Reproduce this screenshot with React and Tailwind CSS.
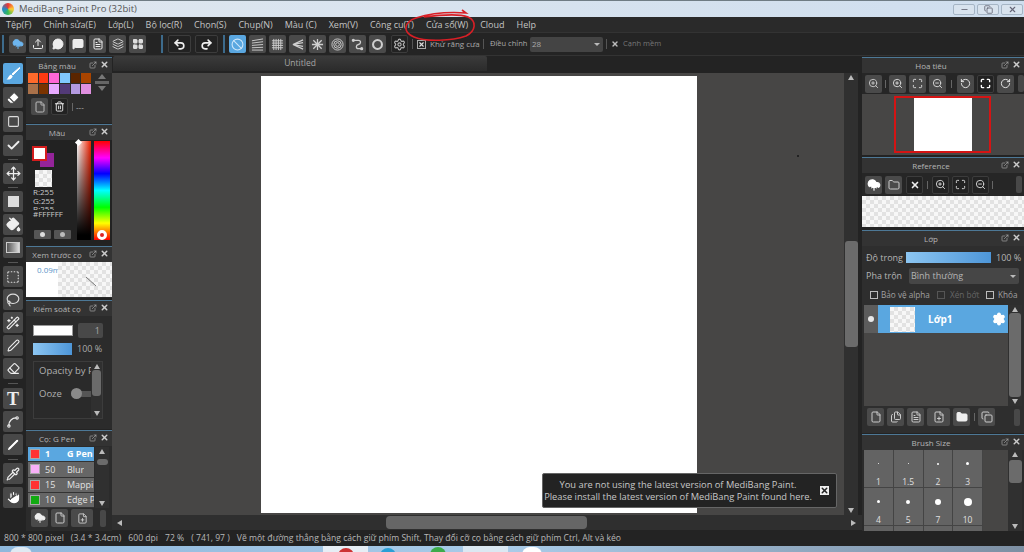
import React from "react";
import {
  Upload, MessageCircle, MessageSquare, FileText, LayoutGrid, Undo2, Redo2, Ban, Move, PaintBucket, Pipette, Hand,
  WandSparkles, Eraser, Square, File, Trash2, ZoomIn, ZoomOut, Maximize, X, ExternalLink, Folder,
  CloudUpload, Settings, Copy, RotateCcw, RotateCw, Minus, Check, Pen, Spline, Lasso, SquareDashed, Files, FilePlus, Layers,
} from "lucide-react";

const font = "font-['Open_Sans','Noto_Sans',sans-serif]";

function Btn({ children, active, dark, className = "" }) {
  return (
    <div className={`flex h-[18px] w-[17px] shrink-0 items-center justify-center rounded-[2px] ${active ? "bg-[#5aa7e0]" : dark ? "border border-[#3c3c3c] bg-[#222]" : "bg-[#4a4a4a]"} ${className}`}>
      {children}
    </div>
  );
}

function Sep({ className = "" }) {
  return <div className={`h-[18px] w-[2px] shrink-0 bg-[#3d6b8c] ${className}`} />;
}

function LineIcon({ kind }) {
  const c = "#cfcfcf";
  const common = { width: 13, height: 13, viewBox: "0 0 14 14", fill: "none", stroke: c, strokeWidth: 1 };
  if (kind === "para")
    return <svg {...common}><path d="M1 3 13 1M1 5.5 13 4M1 8 13 7M1 10.5 13 10M1 13 13 13" /></svg>;
  if (kind === "grid")
    return <svg {...common}><path d="M1 3h12M1 5.5h12M1 8h12M1 10.5h12M3 1v12M5.500 1v12M8 1v12M10.500 1v12" /></svg>;
  if (kind === "vanish")
    return <svg {...common}><path d="M2 7 13 2M2 7 13 5M2 7 13 9M2 7 13 12" strokeWidth="1.3" /></svg>;
  if (kind === "radial")
    return <svg {...common} strokeWidth="1.4"><path d="M7 1v12M1 7h12M2.500 2.500l9 9M11.500 2.500l-9 9" /></svg>;
  if (kind === "rings")
    return <svg {...common}><circle cx="7" cy="7" r="6" /><circle cx="7" cy="7" r="4" /><circle cx="7" cy="7" r="2" /></svg>;
  if (kind === "curve")
    return <svg {...common} strokeWidth="1.4"><path d="M3 2.500h5c3 0 3 4 0 4.500-3 .5-3 4.500 0 4.500h3" /><circle cx="2.500" cy="2.500" r="1" fill={c} /><circle cx="11.500" cy="11.500" r="1" fill={c} /></svg>;
  if (kind === "ring")
    return <svg {...common} strokeWidth="2.200"><circle cx="7" cy="7" r="4.800" /></svg>;
  return null;
}

function BrushIcon() {
  return (
    <svg width="16" height="16" viewBox="0 0 16 16" fill="#fff">
      <path d="M14.500 1.500 15 2 8 9 7 8z" stroke="#fff" strokeWidth="1" />
      <path d="M6 8.500 7.700 10.200C7.200 12.500 4.500 14 1.500 13.500 3.200 12.500 3.500 9.500 6 8.500z" />
    </svg>
  );
}

function Tool({ children, active, className = "" }) {
  return (
    <div className={`flex h-[21px] w-[20px] shrink-0 items-center justify-center rounded-[2px] ${active ? "bg-[#5aa7e0]" : "bg-[#484848]"} ${className}`}>
      {children}
    </div>
  );
}

function ToolSep({ className = "my-[3px]" }) {
  return <div className={`h-px w-[10px] shrink-0 bg-[#555] ${className}`} />;
}

function PanelHeader({ title }) {
  return (
    <div className="relative flex h-[16px] shrink-0 items-center justify-center border-t border-[#4d7896] bg-[#333] text-[8px] text-[#b5b5b5]">
      <span className="mr-[24px] whitespace-nowrap">{title}</span>
      <div className="absolute right-[3px] top-[2px] flex items-center gap-[3px]">
        <ExternalLink size={8} color="#aaa" />
        <X size={9} color="#ccc" strokeWidth={4} />
      </div>
    </div>
  );
}

const sw = ["#ff6a2b", "#ff3a12", "#ff66d6", "#80c8ff", "#5a2500", "#a84400", "#a9714a", "#7a3300", "#e8aaff", "#523a78", "#b39ae0", "#e090e0"];

function Checker({ className = "" }) {
  return (
    <div className={`bg-[repeating-conic-gradient(#e2e2e2_0%_25%,#f7f7f7_0%_50%)] bg-[length:8px_8px] ${className}`} />
  );
}

function BrushRow({ color, n, name, active }) {
  return (
    <div className={`flex h-[15.300px] items-center border-b border-[#333] text-[9px] ${active ? "bg-[#5aa7e0] font-bold text-white" : "bg-[#666] text-[#e2e2e2]"}`}>
      <div className="ml-[2px] h-[10px] w-[10px] shrink-0 border border-[#aaa]" style={{ background: color }} />
      <span className="ml-[3px] w-[24px] shrink-0 pl-[2px]">{n}</span>
      <span className="overflow-hidden whitespace-nowrap">{name}</span>
    </div>
  );
}

function VScroll({ className = "", thumb = "h-[14px]", thumbMt = "mt-0" }) {
  return (
    <div className={`flex flex-col items-center bg-[#303030] ${className}`}>
      <div className="mt-[2px] h-0 w-0 border-x-[3px] border-b-[5px] border-x-transparent border-b-[#bbb]" />
      <div className="relative w-full flex-1">
        <div className={`mx-auto w-[9px] rounded-[3px] bg-[#6b6b6b] ${thumb} ${thumbMt}`} />
      </div>
      <div className="mb-[2px] h-0 w-0 border-x-[3px] border-t-[5px] border-x-transparent border-t-[#bbb]" />
    </div>
  );
}

function SizeCell({ d, label }) {
  return (
    <div className="flex h-[38px] flex-col items-center border-b border-r border-[#444] bg-[#636363]">
      <div className="flex h-[27px] shrink-0 items-center justify-center">
        <div className="rounded-full bg-white" style={{ width: d, height: d }} />
      </div>
      <span className="text-[8.5px] leading-[10px] text-[#e0e0e0]">{label}</span>
    </div>
  );
}

export default function App() {
  return (
    <div className={`relative flex h-[552px] w-[1024px] flex-col overflow-hidden bg-[#222] ${font}`}>
      {/* Title bar */}
      <div className="flex h-[17px] shrink-0 items-center border-t border-[#6f7c84] bg-gradient-to-r from-[#dfe7ef] to-[#cfdeee] pl-[2px]">
        <div className="h-[12px] w-[12px] rounded-full bg-[conic-gradient(#e33,#fc3,#3b5,#28c,#e33)]" />
        <span className="ml-[5px] text-[9.5px] text-[#555]">MediBang Paint Pro (32bit)</span>
        <div className="ml-auto mr-px flex gap-[2px]">
          {[<Minus key="a" size={9} color="#556" />, <Copy key="b" size={9} color="#556" />, <X key="c" size={9} color="#667" strokeWidth={3} />].map((ic, i) => (
            <div key={i} className="flex h-[11px] w-[22px] items-center justify-center rounded-[2px] border border-[#a5b5c5] bg-[#d8e3ee]">{ic}</div>
          ))}
        </div>
      </div>

      {/* Menu */}
      <div className="relative flex h-[16px] shrink-0 items-center gap-[12px] border-b border-[#333] bg-[#2a2a2a] pl-[6px] text-[9px] text-[#c4c4c4]">
        <span>Tệp(F)</span><span>Chỉnh sửa(E)</span><span>Lớp(L)</span><span>Bộ lọc(R)</span><span>Chọn(S)</span><span>Chụp(N)</span><span>Màu (C)</span><span>Xem(V)</span><span>Công cụ(T)</span><span>Cửa sổ(W)</span><span>Cloud</span><span>Help</span>
      </div>

      {/* Toolbar */}
      <div className="flex h-[23px] shrink-0 items-center border-b border-[#333] bg-[#242424] text-[8px] text-[#a8a8a8]">
        <Sep className="ml-[2px]" />
        <div className="ml-[5px] flex gap-[3px]">
          <Btn><CloudUpload size={12} color="#6db5ee" fill="#6db5ee" /></Btn>
          <Btn><Upload size={12} color="#eee" /></Btn>
          <Btn><MessageCircle size={12} color="#eee" fill="#eee" /></Btn>
          <Btn><MessageSquare size={12} color="#eee" fill="#eee" /></Btn>
          <Btn><FileText size={12} color="#eee" /></Btn>
          <Btn><Layers size={12} color="#ccc" /></Btn>
          <Btn><LayoutGrid size={12} color="#ddd" fill="#ddd" /></Btn>
        </div>
        <Sep className="ml-[15px]" />
        <div className="ml-[5px] flex gap-[4px]">
          <Btn dark className="!w-[23px]"><Undo2 size={13} color="#eee" strokeWidth={3} /></Btn>
          <Btn dark className="!w-[23px]"><Redo2 size={13} color="#eee" strokeWidth={3} /></Btn>
        </div>
        <Sep className="ml-[5px]" />
        <div className="ml-[4px] flex gap-[3px]">
          <Btn active><Ban size={13} color="#cde6fa" /></Btn>
          <Btn><LineIcon kind="para" /></Btn>
          <Btn><LineIcon kind="grid" /></Btn>
          <Btn><LineIcon kind="vanish" /></Btn>
          <Btn><LineIcon kind="radial" /></Btn>
          <Btn><LineIcon kind="rings" /></Btn>
          <Btn><LineIcon kind="curve" /></Btn>
          <Btn><LineIcon kind="ring" /></Btn>
          <Btn dark className="ml-[2px]"><Settings size={13} color="#bbb" /></Btn>
        </div>
        <div className="ml-[4px] h-[10px] w-px bg-[#555]" />
        <div className="ml-[4px] flex h-[9px] w-[9px] items-center justify-center border border-[#aaa]"><X size={7} color="#ddd" strokeWidth={4} /></div>
        <span className="ml-[4px] w-[48px] whitespace-nowrap">Khử răng cưa</span>
        <div className="ml-[5px] h-[10px] w-px bg-[#555]" />
        <span className="ml-[6px] w-[35px] whitespace-nowrap text-[7.500px]">Điều chỉnh</span>
        <div className="ml-[5px] flex h-[15px] w-[73px] items-center rounded-[2px] bg-[#444] pl-[2px] text-[#aaa]">
          28
          <div className="ml-auto mr-[3px] h-0 w-0 border-x-[3px] border-t-[3px] border-x-transparent border-t-[#bbb]" />
        </div>
        <div className="ml-[3px] h-[10px] w-px bg-[#555]" />
        <X size={8} color="#bbb" strokeWidth={4} className="ml-[4px]" />
        <span className="ml-[4px] whitespace-nowrap text-[7.500px] text-[#777]">Cạnh mềm</span>
      </div>

      {/* Main */}
      <div className="flex min-h-0 flex-1">
        {/* Tools */}
        <div className="flex w-[26px] shrink-0 flex-col items-center bg-[#232323] pt-[7px]">
          <div className="flex flex-col gap-[3px]">
            <Tool active><BrushIcon /></Tool>
            <Tool><Eraser size={14} color="#484848" fill="#fff" /></Tool>
            <Tool><Square size={13} color="#ddd" /></Tool>
            <Tool><Check size={15} color="#eee" strokeWidth={3} /></Tool>
          </div>
          <ToolSep />
          <Tool><Move size={15} color="#eee" /></Tool>
          <ToolSep />
          <div className="flex flex-col gap-[2px]">
            <Tool><div className="h-[11px] w-[11px] bg-[#ddd]" /></Tool>
            <Tool><PaintBucket size={15} color="#eee" fill="#eee" /></Tool>
            <Tool><div className="h-[11px] w-[14px] border border-[#ccc] bg-gradient-to-r from-[#555] to-[#ddd]" /></Tool>
          </div>
          <ToolSep className="mb-[3px] mt-[4px]" />
          <div className="flex flex-col gap-[2px]">
            <Tool><SquareDashed size={14} color="#ddd" /></Tool>
            <Tool><Lasso size={14} color="#ddd" /></Tool>
            <Tool><WandSparkles size={14} color="#eee" /></Tool>
            <Tool><Pen size={13} color="#eee" /></Tool>
            <Tool><Eraser size={13} color="#eee" /></Tool>
          </div>
          <ToolSep className="my-[4px]" />
          <div className="flex flex-col gap-[2px]">
            <Tool><span className="font-['Liberation_Serif',serif] text-[18px] font-bold leading-none text-[#eee]">T</span></Tool>
            <Tool><Spline size={14} color="#eee" /></Tool>
            <Tool><Pen size={14} color="#484848" fill="#fff" /></Tool>
          </div>
          <ToolSep className="mb-[3px] mt-[4px]" />
          <div className="flex flex-col gap-[3px]">
            <Tool><Pipette size={14} color="#eee" /></Tool>
            <Tool><Hand size={15} color="#484848" fill="#fff" /></Tool>
          </div>
        </div>

        {/* Left palettes */}
        <div className="flex w-[86px] shrink-0 flex-col bg-[#232323] pt-px">
          {/* Bang mau */}
          <div className="flex h-[66px] shrink-0 flex-col bg-[#2b2b2b]">
            <PanelHeader title="Bảng màu" />
            <div className="flex px-[2px]">
              <div className="grid w-[63px] grid-cols-6 gap-[1px]">
                {sw.map((c) => <div key={c} className="h-[10px]" style={{ background: c }} />)}
              </div>
              <div className="ml-[4px] flex w-[14px] flex-col items-center gap-[2px] pt-px">
                <div className="h-0 w-0 border-x-[4px] border-b-[5px] border-x-transparent border-b-[#777]" />
                <div className="h-[3px] w-[14px] bg-[#666]" />
                <div className="h-0 w-0 border-x-[4px] border-t-[5px] border-x-transparent border-t-[#777]" />
              </div>
            </div>
            <div className="mt-[4px] flex items-center gap-[3px] px-[5px] text-[8px] text-[#bbb]">
              <Btn className="!h-[17px] !w-[17px]"><File size={12} color="#bbb" /></Btn>
              <Btn dark className="!h-[17px] !w-[17px]"><Trash2 size={11} color="#eee" /></Btn>
              <div className="ml-[1px] h-[8px] w-px bg-[#666]" />
              <span>---</span>
            </div>
          </div>

          {/* Mau */}
          <div className="mt-px flex h-[120px] shrink-0 flex-col bg-[#222]">
            <PanelHeader title="Màu" />
            <div className="flex flex-1">
              <div className="relative w-[51px]">
                <div className="absolute left-[14px] top-[13px] h-[14px] w-[14px] bg-[#95249a]" />
                <div className="absolute left-[6px] top-[6px] h-[15px] w-[15px] border-2 border-[#d41c1c] bg-white" />
                <Checker className="absolute left-[9px] top-[30px] h-[17px] w-[17px]" />
                <div className="absolute left-[7px] top-[48px] text-[8px] leading-[8.500px] text-[#c8c8c8]">
                  <div>R:255</div><div>G:255</div><div className="h-[5px] overflow-hidden">B:255</div>
                  <div className="whitespace-nowrap">#FFFFFF</div>
                </div>
                <div className="absolute left-[8px] top-[90px] flex gap-[3px]">
                  <div className="flex h-[9px] w-[17px] items-center justify-center rounded-[1px] bg-[#555]"><div className="h-[5px] w-[5px] rounded-full bg-[#ddd]" /></div>
                  <div className="flex h-[9px] w-[17px] items-center justify-center rounded-[1px] bg-[#555]"><div className="h-[5px] w-[5px] rounded-full bg-[#bbb]" /></div>
                </div>
              </div>
              <div className="relative mt-px h-[99px] w-[14px] bg-[linear-gradient(to_bottom,transparent,#000_95%),linear-gradient(to_right,#fff,#f02000)]">
                <div className="absolute -left-px -top-px h-[5px] w-[5px] rotate-45 bg-white" />
              </div>
              <div className="relative ml-[3px] mt-px h-[99px] w-[16px] bg-[linear-gradient(to_bottom,#f00,#f0f_17%,#00f_33%,#0ff_50%,#0f0_67%,#ff0_83%,#f00)]">
                <div className="absolute bottom-0 left-[3px] h-[10px] w-[10px] rounded-full border-[3px] border-white bg-[#d22]" />
              </div>
            </div>
          </div>

          {/* Xem truoc */}
          <div className="mt-[2px] flex h-[52px] shrink-0 flex-col bg-[#2b2b2b]">
            <PanelHeader title="Xem trước cọ" />
            <div className="relative flex h-[35px]">
              <div className="w-[32px] whitespace-nowrap bg-white pl-[11px] pt-[2px] text-[8px] text-[#5a94c8]">0.09m</div>
              <Checker className="flex-1" />
              <svg className="absolute left-[58px] top-[14px]" width="14" height="12" viewBox="0 0 14 12"><path d="M2 1 12 10" stroke="#777" strokeWidth="1" /></svg>
            </div>
          </div>

          {/* Kiem soat */}
          <div className="mt-[2px] flex h-[129px] shrink-0 flex-col bg-[#2b2b2b]">
            <PanelHeader title="Kiểm soát cọ" />
            <div className="mt-[7px] flex items-center px-[7px]">
              <div className="h-[11px] w-[40px] border border-[#999] bg-white" />
              <div className="ml-[5px] flex h-[15px] w-[25px] items-center justify-end rounded-[2px] bg-[#484848] pr-[3px] text-[9px] text-[#aaa]">1</div>
            </div>
            <div className="mt-[5px] flex h-[12px] items-center px-[7px] text-[9px] text-[#aaa]">
              <div className="h-[12px] w-[39px] bg-gradient-to-r from-[#8cc6f2] to-[#4d96d8]" />
              <span className="ml-[5px] whitespace-nowrap">100 %</span>
            </div>
            <div className="mx-[7px] mt-[6px] flex h-[58px] w-[70px] border border-[#3c3c3c] bg-[#2a2a2a] text-[9.500px] text-[#b0b0b0]">
              <div className="flex-1 overflow-hidden whitespace-nowrap pl-[5px] pt-[2px]">
                <div>Opacity by Pr</div>
                <div className="mt-[9px] flex items-center">
                  <span>Ooze</span>
                  <div className="relative ml-[9px] h-[6px] w-[24px] shrink-0 rounded-[3px] bg-[#555]">
                    <div className="absolute -top-[3px] left-0 h-[11px] w-[11px] rounded-full bg-[#8a8a8a]" />
                  </div>
                </div>
              </div>
              <VScroll className="w-[11px]" thumb="h-[26px]" thumbMt="mt-[1px]" />
            </div>
          </div>

          {/* Brush */}
          <div className="mt-px flex min-h-0 flex-1 flex-col bg-[#2b2b2b]">
            <PanelHeader title="Cọ: G Pen" />
            <div className="flex h-[62px] pl-[2px] pt-px">
              <div className="w-[66px] overflow-hidden">
                <BrushRow color="#f33" n="1" name="G Pen" active />
                <BrushRow color="#f8b0f8" n="50" name="Blur" />
                <BrushRow color="#f33" n="15" name="Mapping" />
                <BrushRow color="#1a1" n="10" name="Edge Pen" />
              </div>
              <VScroll className="ml-[1px] w-[14px]" thumb="h-[6px]" thumbMt="mt-[5px] !w-[11px]" />
            </div>
            <div className="mt-px flex items-center gap-[3px] pl-[5px]">
              <Btn><CloudUpload size={12} color="#eee" fill="#eee" /></Btn>
              <Btn><File size={12} color="#ccc" /></Btn>
              <Btn className="!w-[22px]"><FilePlus size={11} color="#ccc" /></Btn>
              <div className="ml-[4px] h-[17px] w-[6px] rounded-[2px] bg-[#484848]" />
            </div>
          </div>
        </div>

        {/* Canvas area */}
        <div className="flex min-w-0 flex-1 flex-col bg-[#2a2a2a]">
          <div className="flex h-[17px] shrink-0 items-start bg-[#232323] pl-px">
            <div className="flex h-[15px] w-[374px] items-center justify-center rounded-t-[2px] bg-gradient-to-b from-[#3b3b3b] to-[#2b2b2b] text-[8.500px] text-[#a5a5a5]">Untitled</div>
          </div>
          <div className="flex min-h-0 flex-1">
            <div className="relative min-w-0 flex-1 bg-[#474645] pt-[3px]">
              <div className="ml-[149px] h-[437px] w-[436px] bg-white" />
              <div className="absolute left-[685px] top-[82px] h-[2px] w-[2px] bg-[#222]" />
            </div>
            <VScroll className="w-[14px]" thumb="h-[106px]" thumbMt="mt-[161px] !w-[13px]" />
            <div className="w-[4px] bg-[#232323]" />
          </div>
          <div className="flex h-[15px] shrink-0 items-center bg-[#2f2f2f] pr-[4px]">
            <div className="ml-[5px] h-0 w-0 border-y-[3px] border-r-[5px] border-y-transparent border-r-[#bbb]" />
            <div className="ml-[264px] h-[13px] w-[201px] rounded-[4px] bg-[#666]" />
            <div className="ml-auto mr-[2px] h-0 w-0 border-y-[3px] border-l-[5px] border-y-transparent border-l-[#bbb]" />
          </div>
          <div className="h-px bg-[#232323]" />
        </div>

        {/* Right panels */}
        <div className="flex w-[162px] shrink-0 flex-col bg-[#232323] pt-px">
          <div className="flex h-[98px] shrink-0 flex-col bg-[#333]">
            <PanelHeader title="Hoa tiêu" />
            <div className="flex h-[21px] items-center gap-[3px] bg-[#262626] pl-[3px]">
              <Btn><ZoomIn size={11} color="#ccc" /></Btn>
              <div className="h-[8px] w-px bg-[#666]" />
              <Btn><ZoomIn size={11} color="#ddd" /></Btn>
              <Btn><Maximize size={11} color="#ddd" /></Btn>
              <Btn><ZoomOut size={11} color="#ddd" /></Btn>
              <div className="ml-[2px] h-[8px] w-px bg-[#666]" />
              <Btn className="ml-[2px]"><RotateCcw size={11} color="#eee" /></Btn>
              <Btn dark><Maximize size={11} color="#fff" strokeWidth={3} /></Btn>
              <Btn><RotateCw size={11} color="#eee" /></Btn>
              <div className="ml-[1px] h-[17px] w-[6px] rounded-[2px] bg-[#484848]" />
            </div>
            <div className="flex flex-1 items-start justify-center bg-[#474645] pr-[1px] pt-[2px]">
              <div className="flex h-[57px] w-[97px] justify-center border-2 border-[#d41414]">
                <div className="h-full w-[58px] bg-white" />
              </div>
            </div>
          </div>

          <div className="mt-[2px] flex h-[70px] shrink-0 flex-col bg-[#333]">
            <PanelHeader title="Reference" />
            <div className="flex h-[23px] items-center gap-[3px] bg-[#262626] pl-[3px]">
              <Btn><CloudUpload size={14} color="#fff" fill="#fff" /></Btn>
              <Btn><Folder size={12} color="#ccc" /></Btn>
              <Btn dark className="ml-px"><X size={10} color="#eee" strokeWidth={4} /></Btn>
              <div className="ml-px h-[8px] w-px bg-[#666]" />
              <Btn dark className="ml-px"><ZoomIn size={11} color="#ddd" /></Btn>
              <Btn dark><Maximize size={11} color="#ddd" /></Btn>
              <Btn dark><ZoomOut size={11} color="#ddd" /></Btn>
              <div className="h-[8px] w-px bg-[#666]" />
              <div className="ml-auto mr-[2px] h-[17px] w-[6px] rounded-[2px] bg-[#484848]" />
            </div>
            <Checker className="flex-1" />
          </div>

          <div className="mt-[3px] flex h-[203px] shrink-0 flex-col bg-[#2e2e2e] text-[9px] text-[#b5b5b5]">
            <PanelHeader title="Lớp" />
            <div className="mt-[3px] flex h-[17px] items-center pl-[4px]">
              <span className="w-[40px] whitespace-nowrap">Độ trong</span>
              <div className="h-[11px] w-[85px] bg-gradient-to-r from-[#8cc6f2] to-[#4d96d8]" />
              <span className="ml-[5px] whitespace-nowrap">100 %</span>
            </div>
            <div className="mt-[1px] flex h-[18px] items-center pl-[4px]">
              <span className="w-[43px] whitespace-nowrap">Pha trộn</span>
              <div className="flex h-[16px] w-[110px] items-center rounded-[2px] bg-[#464646] pl-[2px]">
                Bình thường
                <div className="ml-auto mr-[3px] h-0 w-0 border-x-[3px] border-t-[3px] border-x-transparent border-t-[#bbb]" />
              </div>
            </div>
            <div className="mt-[3px] flex h-[14px] items-center whitespace-nowrap pl-[8px] text-[8.200px] text-[#a0a0a0]">
              <div className="h-[8px] w-[8px] shrink-0 border border-[#bbb]" />
              <span className="ml-[3px] w-[46px]">Bảo vệ alpha</span>
              <div className="ml-[10px] h-[8px] w-[8px] shrink-0 border border-[#555]" />
              <span className="ml-[5px] w-[27px] text-[#666]">Xén bớt</span>
              <div className="ml-[9px] h-[8px] w-[8px] shrink-0 border border-[#bbb]" />
              <span className="ml-[4px]">Khóa</span>
            </div>
            <div className="mt-[3px] flex h-[101px] pl-[2px] pr-[2px]">
              <div className="flex-1 bg-[#474645]">
                <div className="flex h-[28px] items-center bg-[#5aa7e0]">
                  <div className="flex h-full w-[14px] items-center justify-center bg-[#5c5c5c]"><div className="h-[6px] w-[6px] rounded-full bg-[#e8e8e8]" /></div>
                  <Checker className="ml-[12px] h-[25px] w-[25px]" />
                  <span className="ml-[13px] text-[10px] font-bold text-white">Lớp1</span>
                  <Settings size={14} color="#fff" fill="#fff" className="ml-auto mr-[2px]" />
                </div>
              </div>
              <VScroll className="w-[14px] bg-[#2a2a2a]" thumb="h-[84px]" thumbMt="mt-px !w-[12px]" />
            </div>
            <div className="mt-[2px] flex items-center gap-[3px] pl-[5px]">
              <Btn><File size={12} color="#ccc" /></Btn>
              <Btn><Files size={12} color="#ccc" /></Btn>
              <Btn><FileText size={12} color="#ccc" /></Btn>
              <Btn className="!w-[23px]"><FilePlus size={12} color="#ccc" /></Btn>
              <Btn><Folder size={12} color="#eee" fill="#eee" /></Btn>
              <div className="ml-px h-[8px] w-px bg-[#666]" />
              <Btn><Copy size={12} color="#ccc" /></Btn>
              <div className="ml-[16px] h-[17px] w-[6px] rounded-[2px] bg-[#484848]" />
            </div>
          </div>

          <div className="mt-px flex min-h-0 flex-1 flex-col bg-[#2b2b2b]">
            <PanelHeader title="Brush Size" />
            <div className="flex h-[81px] overflow-hidden pl-[2px] pr-[2px]">
              <div className="flex-1 bg-[#474645]">
                <div className="grid w-[119px] grid-cols-4">
                  <SizeCell d={1} label="1" />
                  <SizeCell d={1} label="1.5" />
                  <SizeCell d={2} label="2" />
                  <SizeCell d={3} label="3" />
                  <SizeCell d={3} label="4" />
                  <SizeCell d={4} label="5" />
                  <SizeCell d={6} label="7" />
                  <SizeCell d={8} label="10" />
                  <SizeCell d={0} label="" />
                  <SizeCell d={0} label="" />
                  <SizeCell d={0} label="" />
                  <SizeCell d={0} label="" />
                </div>
              </div>
              <VScroll className="w-[14px]" thumb="h-[23px]" thumbMt="mt-[3px] !w-[13px]" />
            </div>
          </div>
        </div>
      </div>

      {/* Status */}
      <div className="flex h-[15px] shrink-0 items-center whitespace-pre bg-[#232323] pl-[4px] text-[8.600px] text-[#b8b8b8]">
        <span>800 * 800 pixel</span><span className="ml-[7px]">(3.4 * 3.4cm)</span><span className="ml-[7px]">600 dpi</span><span className="ml-[7px]">72 %</span><span className="ml-[7px]">( 741, 97 )</span><span className="ml-[7px]">Vẽ một đường thẳng bằng cách giữ phím Shift, Thay đổi cỡ cọ bằng cách giữ phím Ctrl, Alt và kéo</span>
      </div>

      {/* Taskbar */}
      <div className="relative h-[6px] shrink-0 overflow-hidden bg-gradient-to-r from-[#8fb8dc] via-[#a9cbe8] to-[#7d8fa3]">
        <div className="absolute left-[10px] top-px h-[16px] w-[22px] rounded-full bg-[#dfeaf3]" />
        <div className="absolute left-[323px] top-0 h-[6px] w-[45px] bg-[#e6eef5]" />
        <div className="absolute left-[463px] top-0 h-[6px] w-[45px] bg-[#dbe8f2]" />
        <div className="absolute left-[338px] top-[2px] h-[16px] w-[16px] rounded-full bg-[#cc3333]" />
        <div className="absolute left-[380px] top-[2px] h-[16px] w-[16px] rounded-full bg-[#2a9fd6]" />
        <div className="absolute left-[430px] top-[1px] h-[16px] w-[16px] rounded-full bg-[#3cab4a]" />
        <div className="absolute left-[522px] top-[1px] h-[16px] w-[20px] rounded-full bg-white" />
      </div>

      {/* Update notice */}
      <div className="absolute left-[542px] top-[473px] flex h-[35px] w-[295px] items-center rounded-[2px] border border-[#666] bg-[#232323] text-[9.300px] leading-[12px] text-[#c8c8c8]">
        <div className="w-[270px] text-center">
          <div className="whitespace-nowrap">You are not using the latest version of MediBang Paint.</div>
          <div className="whitespace-nowrap">Please install the latest version of MediBang Paint found here.</div>
        </div>
        <div className="ml-[6px] flex h-[11px] w-[11px] items-center justify-center border border-[#222] bg-[#eee]"><X size={9} color="#222" strokeWidth={4} /></div>
      </div>

      {/* Hand-drawn annotation */}
      <svg className="absolute left-[400px] top-0" width="80" height="44" viewBox="0 0 80 44" fill="none">
        <path d="M24 17C40 15 58 13 68 17 77 21 76 31 66 36 52 41 26 42 14 37 2 32 4 22 16 18 32 13 52 12 66 13L62 10" stroke="#d81f26" strokeWidth="1.600" />
      </svg>
    </div>
  );
}
